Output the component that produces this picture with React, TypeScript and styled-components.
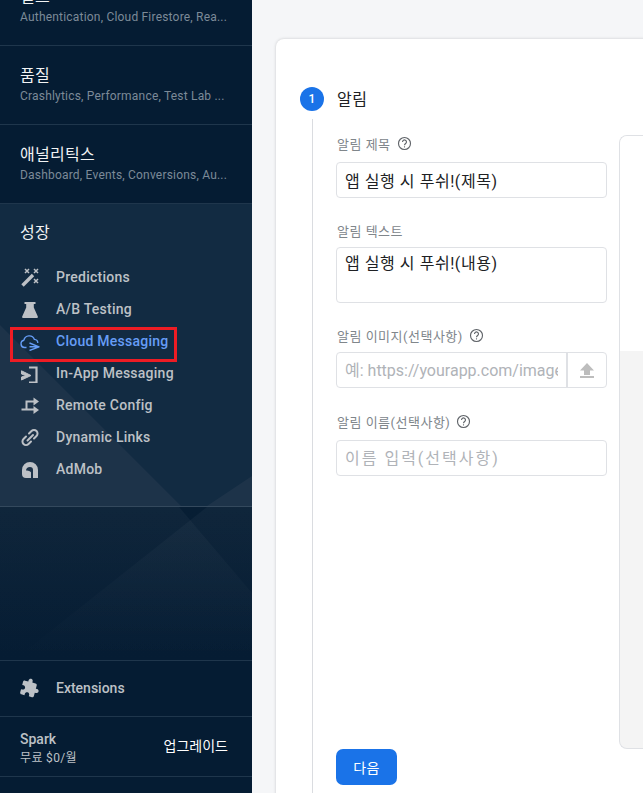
import React from 'react'
import styled, { createGlobalStyle } from 'styled-components'

const GlobalStyle = createGlobalStyle`
  html, body {
    margin: 0;
    height: 100%;
    overflow: hidden;
    background: #f5f6f8;
    font-family: Roboto, "Noto Sans CJK KR", sans-serif;
  }
  #root { height: 100%; }
`

const Page = styled.div`
  display: flex;
  width: 643px;
  height: 793px;
  overflow: hidden;
`

/* sidebar */
const Sidebar = styled.aside`
  width: 252px;
  height: 793px;
  flex: none;
  display: flex;
  flex-direction: column;
  overflow: hidden;
  background: #051c33;
`
const Group = styled.div<{ $clipped?: boolean }>`
  box-sizing: border-box;
  height: 79px;
  padding: 19px 20px 0;
  flex: none;
  border-bottom: 1px solid #1f364c;
  margin-top: ${(p) => (p.$clipped ? '-33px' : '0')};
`
const GroupTitle = styled.div`
  font-size: 16px;
  line-height: 22px;
  letter-spacing: 0.3px;
  color: #f1f3f4;
`
const GroupSub = styled.div`
  font-size: 12px;
  line-height: 18px;
  letter-spacing: 0.2px;
  color: #7c8a98;
  white-space: nowrap;
`
const Growth = styled.div`
  position: relative;
  box-sizing: border-box;
  height: 303px;
  flex: none;
  padding: 18px 0 0;
  background: #122b42;
  border-bottom: 1px solid #34495d;
`
const GrowthTitle = styled(GroupTitle)`
  position: relative;
  padding: 0 20px;
  margin-bottom: 17px;
`
const Decoration = styled.svg`
  position: absolute;
  left: 0;
  top: 0;
  pointer-events: none;
`
const NavList = styled.div`
  position: relative;
  display: flex;
  flex-direction: column;
`
const NavRow = styled.div<{ $active?: boolean }>`
  position: relative;
  display: flex;
  align-items: center;
  height: 32px;
  padding-left: 20px;
  font-size: 14px;
  font-weight: 500;
  letter-spacing: 0.25px;
  color: ${(p) => (p.$active ? '#669df6' : '#bdc1c6')};
`
const IconSlot = styled.span`
  display: flex;
  width: 20px;
  height: 20px;
  margin-right: 16px;
  flex: none;
`
const Annotation = styled.span`
  position: absolute;
  left: 10px;
  top: 2px;
  width: 167px;
  height: 35px;
  box-sizing: border-box;
  border: 3px solid #ed1c24;
`
const Filler = styled.div`
  position: relative;
  flex: 1;
  overflow: hidden;
  background: linear-gradient(#071e34, #051c33);
`
const FooterRow = styled.div`
  box-sizing: border-box;
  display: flex;
  align-items: center;
  flex: none;
  border-top: 1px solid #1f364c;
`
const ExtensionsRow = styled(FooterRow)`
  height: 56px;
  padding: 0 0 2px 20px;
  font-size: 14px;
  font-weight: 500;
  color: #bdc1c6;
`
const PlanRow = styled(FooterRow)`
  height: 61px;
  padding: 0 24px 0 20px;
  justify-content: space-between;
  border-bottom: 1px solid #1f364c;
`
const PlanName = styled.div`
  margin-top: 3px;
  font-size: 14px;
  font-weight: 500;
  line-height: 19px;
  color: #bdc1c6;
`
const PlanPrice = styled.div`
  font-size: 12px;
  line-height: 18px;
  letter-spacing: 0.35px;
  color: #bdc1c6;
`
const Upgrade = styled.span`
  font-size: 14px;
  line-height: 20px;
  margin-bottom: 2px;
  color: #fff;
`
const BottomSpace = styled.div`
  height: 16px;
  flex: none;
`

/* main */
const Main = styled.main`
  flex: 1;
  padding: 39px 0 0 24px;
  overflow: hidden;
`
const Card = styled.section`
  box-sizing: border-box;
  width: 500px;
  height: 800px;
  padding: 48px 0 0 24px;
  background: #fff;
  border-radius: 8px 0 0 0;
  box-shadow: 0 0 3px rgba(60, 64, 67, 0.25);
`
const StepHead = styled.div`
  display: flex;
  align-items: center;
  gap: 13px;
  height: 24px;
`
const StepBadge = styled.span`
  display: flex;
  align-items: center;
  justify-content: center;
  width: 24px;
  height: 24px;
  border-radius: 50%;
  background: #1a73e8;
  color: #fff;
  font-size: 12px;
  font-weight: 500;
`
const StepTitle = styled.h2`
  margin: -3px 0 0;
  font-size: 16px;
  font-weight: 400;
  letter-spacing: 0.5px;
  color: #202124;
`
const StepBody = styled.div`
  display: flex;
  height: 680px;
  margin: 8px 0 0 12px;
  padding-left: 23px;
  border-left: 1px solid #dadce0;
`
const Form = styled.div`
  position: relative;
  box-sizing: border-box;
  width: 271px;
  height: 666px;
  flex: none;
  padding-top: 16px;
  display: flex;
  flex-direction: column;
`
const Field = styled.div`
  display: flex;
  flex-direction: column;
  margin-bottom: 24px;
`
const Label = styled.label<{ $tight?: boolean }>`
  display: flex;
  align-items: center;
  gap: 6px;
  height: 17px;
  margin: 0 0 ${(p) => (p.$tight ? '8px' : '10px')} 1px;
  font-size: 13px;
  letter-spacing: 0.5px;
  color: #80868b;
`
const HelpIcon = styled.svg`
  width: 15px;
  height: 15px;
`
const inputBox = `
  box-sizing: border-box;
  width: 271px;
  border: 1px solid #dfe1e5;
  border-radius: 4px;
  padding: 0 8px;
  font-family: Roboto, "Noto Sans CJK KR", sans-serif;
  font-size: 16px;
  color: #202124;
  outline: none;
  background: #fff;
  &::placeholder { color: #b0b3b8; opacity: 1; }
`
const TextInput = styled.input<{ $spaced?: boolean }>`
  ${inputBox}
  height: 36px;
  letter-spacing: ${(p) => (p.$spaced ? '2px' : '0.55px')};
`
const TextArea = styled.textarea`
  ${inputBox}
  height: 56px;
  padding-top: 5px;
  resize: none;
  line-height: 22px;
  letter-spacing: 0.55px;
`
const UploadGroup = styled.div`
  display: flex;
  width: 271px;
  height: 36px;
  margin-bottom: 1px;
  box-sizing: border-box;
  border: 1px solid #dfe1e5;
  border-radius: 4px;
`
const UploadInput = styled.input`
  ${inputBox}
  flex: 1;
  width: 230px;
  min-width: 0;
  border: none;
  background: transparent;
`
const UploadButton = styled.div`
  display: flex;
  align-items: center;
  justify-content: center;
  width: 38px;
  flex: none;
  border-left: 2px solid #dfe1e5;
`
const NextButton = styled.button`
  position: absolute;
  left: 0;
  bottom: 0;
  width: 61px;
  height: 36px;
  border: none;
  border-radius: 7px;
  background: #1a73e8;
  color: #fff;
  font-family: inherit;
  font-size: 14px;
  letter-spacing: 0.4px;
`
const Preview = styled.div`
  box-sizing: border-box;
  width: 60px;
  height: 614px;
  margin: 16px 0 0 12px;
  flex: none;
  border: 1px solid #dfe1e5;
  border-right: none;
  border-radius: 8px 0 0 8px;
  overflow: hidden;
  background: #f4f4f4;
`
const PreviewTop = styled.div`
  height: 215px;
  background: #fff;
`

const icons = {
  wand: (
    <svg viewBox="0 0 20 20" width="20" height="20" fill="none" stroke="#bdc1c6">
      <path d="M2.500 18.500 13 8" strokeWidth="3.4" />
      <path d="M5 2l4 4M9 2 5 6M14 2l4 4M18 2l-4 4M14 12l4 4M18 12l-4 4" strokeWidth="1.5" />
    </svg>
  ),
  flask: (
    <svg viewBox="0 0 20 20" width="20" height="20" fill="#bdc1c6">
      <path d="M4.500 3h11v2h-1.700v3.500l4 9c.3.800-.2 1.500-1 1.500H3.200c-.8 0-1.300-.7-1-1.500l4-9V5H4.500z" />
    </svg>
  ),
  cloud: (
    <svg viewBox="0 0 20 20" width="20" height="20" fill="none" stroke="#669df6" strokeWidth="1.4" strokeLinejoin="round">
      <path d="M6.500 16.500H4.500a3.700 3.700 0 0 1-.6-7.300A5.500 5.500 0 0 1 14.400 8.400a3.700 3.700 0 0 1 3.400 3.600" />
      <path d="M9.500 12 19 15.800 9.500 19.500M9.500 15.800H18" />
    </svg>
  ),
  inapp: (
    <svg viewBox="0 0 20 20" width="20" height="20" fill="none" stroke="#bdc1c6" strokeWidth="2.2">
      <path d="M9 4.500h7.500v15H9" />
      <path d="M1.500 7.800 11 12.500l-9.500 4.500v-3l4.500-1.500-4.500-1.500z" fill="#bdc1c6" strokeWidth="1" strokeLinejoin="round" />
    </svg>
  ),
  config: (
    <svg viewBox="0 0 20 20" width="20" height="20" fill="none" stroke="#bdc1c6" strokeWidth="2">
      <path d="M1.500 14.500h5v-8h8M6.500 14.500h8" />
      <path d="M13.500 2.500 19 6.500l-5.500 4zM13.500 11 19 15l-5.500 4z" fill="#bdc1c6" stroke="none" />
    </svg>
  ),
  link: (
    <svg viewBox="0 0 20 20" width="20" height="20" fill="none" stroke="#bdc1c6" strokeWidth="2" strokeLinecap="round">
      <path d="M9 6.500 11.500 4a3.500 3.500 0 0 1 5 5L14 11.500" />
      <path d="M11 14.500 8.500 17a3.500 3.500 0 0 1-5-5L6 9.500" />
      <path d="M7.500 13.500l5.500-5.500" />
    </svg>
  ),
  admob: (
    <svg viewBox="0 0 20 20" width="20" height="20" fill="#bdc1c6">
      <path d="M10 3a8 8 0 0 1 8 8v8h-5v-8a3 3 0 0 0-3-3c-2.500 0-4 1.700-4 3.500 1.800-.4 3.600.4 5 1.800V19H6a4 4 0 0 1-4-4v-4a8 8 0 0 1 8-8z" />
    </svg>
  ),
  puzzle: (
    <svg viewBox="0 0 24 24" width="20" height="20" fill="#bdc1c6">
      <path
        transform="rotate(15 12 12)"
        d="M20.500 11H19V7c0-1.100-.9-2-2-2h-4V3.500C13 2.120 11.880 1 10.500 1S8 2.120 8 3.500V5H4c-1.100 0-1.990.9-1.990 2v3.800H3.500c1.490 0 2.700 1.210 2.700 2.700s-1.210 2.700-2.700 2.700H2V20c0 1.100.9 2 2 2h3.800v-1.500c0-1.490 1.210-2.700 2.700-2.700 1.490 0 2.700 1.210 2.700 2.700V22H17c1.100 0 2-.9 2-2v-4h1.500c1.380 0 2.500-1.120 2.500-2.500S21.880 11 20.500 11z"
      />
    </svg>
  ),
}

const navItems: { label: string; icon: keyof typeof icons; active?: boolean }[] = [
  { label: 'Predictions', icon: 'wand' },
  { label: 'A/B Testing', icon: 'flask' },
  { label: 'Cloud Messaging', icon: 'cloud', active: true },
  { label: 'In-App Messaging', icon: 'inapp' },
  { label: 'Remote Config', icon: 'config' },
  { label: 'Dynamic Links', icon: 'link' },
  { label: 'AdMob', icon: 'admob' },
]

const Help = () => (
  <HelpIcon viewBox="0 0 16 16" fill="none" stroke="#5f6368" strokeWidth="1.2">
    <circle cx="8" cy="8" r="6.4" />
    <path d="M5.900 6.300a2.100 2.100 0 1 1 3.300 1.700c-.8.600-1.200.9-1.200 1.800" />
    <path d="M8 11v1.200" />
  </HelpIcon>
)

export default function App() {
  return (
    <Page>
      <GlobalStyle />
      <Sidebar>
        <Group $clipped>
          <GroupTitle>빌드</GroupTitle>
          <GroupSub>Authentication, Cloud Firestore, Rea...</GroupSub>
        </Group>
        <Group>
          <GroupTitle>품질</GroupTitle>
          <GroupSub>Crashlytics, Performance, Test Lab ...</GroupSub>
        </Group>
        <Group>
          <GroupTitle>애널리틱스</GroupTitle>
          <GroupSub>Dashboard, Events, Conversions, Au...</GroupSub>
        </Group>
        <Growth>
          <Decoration width="252" height="302" viewBox="0 0 252 302">
            <path d="M0 121 L181 302 L0 302z" fill="#1d3349" />
            <path d="M207 302 L252 272 L252 302z" fill="#1d3349" />
          </Decoration>
          <GrowthTitle>성장</GrowthTitle>
          <NavList>
            {navItems.map((item) => (
              <NavRow key={item.label} $active={item.active}>
                {item.active && <Annotation />}
                <IconSlot>{icons[item.icon]}</IconSlot>
                {item.label}
              </NavRow>
            ))}
          </NavList>
        </Growth>
        <Filler>
          <Decoration width="252" height="153" viewBox="0 0 252 153">
            <defs>
              <linearGradient id="fade" x1="0" y1="0" x2="0" y2="1">
                <stop offset="0" stopColor="#fff" stopOpacity="0.035" />
                <stop offset="1" stopColor="#fff" stopOpacity="0" />
              </linearGradient>
            </defs>
            <path d="M0 0 L179 0 L252 86 L252 153 L0 153z" fill="url(#fade)" />
            <path d="M207 0 L252 0 L252 153 L14 153z" fill="url(#fade)" />
          </Decoration>
        </Filler>
        <ExtensionsRow>
          <IconSlot>{icons.puzzle}</IconSlot>
          Extensions
        </ExtensionsRow>
        <PlanRow>
          <div>
            <PlanName>Spark</PlanName>
            <PlanPrice>무료 $0/월</PlanPrice>
          </div>
          <Upgrade>업그레이드</Upgrade>
        </PlanRow>
        <BottomSpace />
      </Sidebar>
      <Main>
        <Card>
          <StepHead>
            <StepBadge>1</StepBadge>
            <StepTitle>알림</StepTitle>
          </StepHead>
          <StepBody>
            <Form>
              <Field>
                <Label>알림 제목 <Help /></Label>
                <TextInput defaultValue="앱 실행 시 푸쉬!(제목)" />
              </Field>
              <Field>
                <Label $tight>알림 텍스트</Label>
                <TextArea defaultValue="앱 실행 시 푸쉬!(내용)" />
              </Field>
              <Field>
                <Label $tight>알림 이미지(선택사항) <Help /></Label>
                <UploadGroup>
                  <UploadInput placeholder="예: https://yourapp.com/image.png" />
                  <UploadButton>
                    <svg viewBox="0 0 16 16" width="16" height="16" fill="#bdbdbd">
                      <path d="M8 1 15 8.500H11V13H5V8.500H1zM1 14h14v2H1z" />
                    </svg>
                  </UploadButton>
                </UploadGroup>
              </Field>
              <Field>
                <Label>알림 이름(선택사항) <Help /></Label>
                <TextInput $spaced placeholder="이름 입력(선택사항)" />
              </Field>
              <NextButton>다음</NextButton>
            </Form>
            <Preview>
              <PreviewTop />
            </Preview>
          </StepBody>
        </Card>
      </Main>
    </Page>
  )
}
